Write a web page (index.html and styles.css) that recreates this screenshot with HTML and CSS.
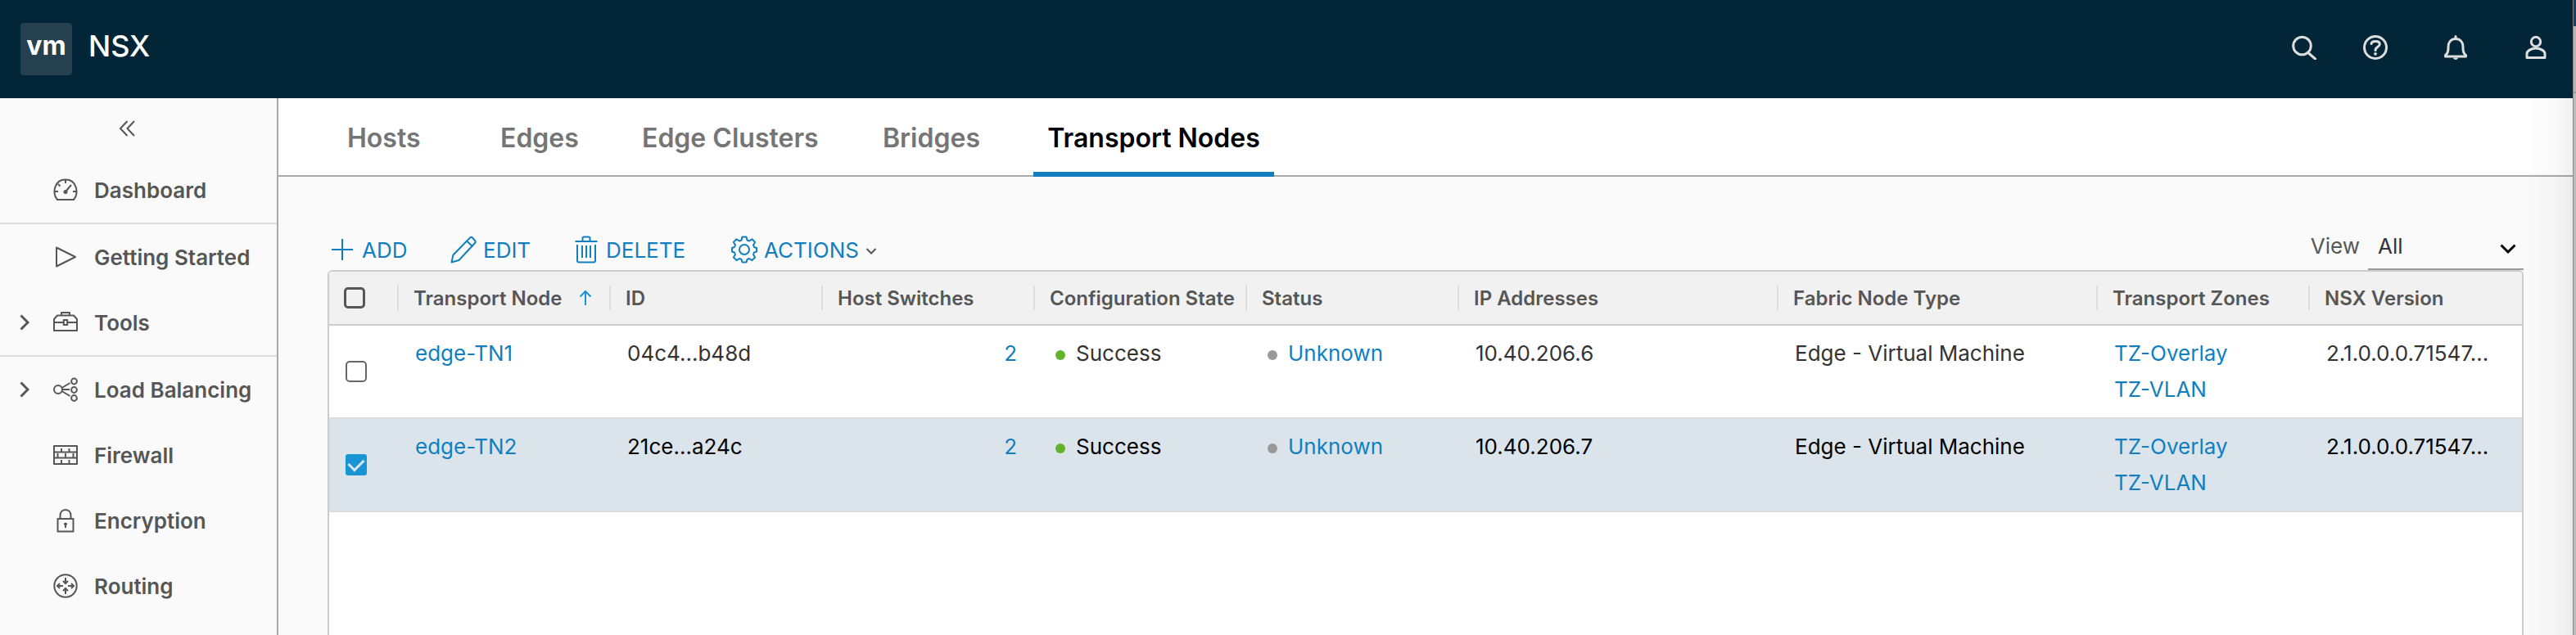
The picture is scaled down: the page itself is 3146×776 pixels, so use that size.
FILE: index.html
```html
<!DOCTYPE html>
<html lang="en">
<head>
<meta charset="utf-8">
<title>NSX - Transport Nodes</title>
<link rel="stylesheet" href="styles.css">
</head>
<body>
<div class="app">
  <header class="topbar">
    <span class="logo">vm</span>
    <span class="product">NSX</span>
    <div class="top-actions">
      <button type="button" aria-label="Search"><svg class="icon-top" viewBox="0 0 30 30"><circle cx="12.500" cy="13" r="10.800"/><path d="M20.500 22l8 7" stroke-linecap="round"/></svg></button>
      <button type="button" aria-label="Help"><svg class="icon-top" viewBox="0 0 30 30"><circle cx="15" cy="15" r="13.500"/><path d="M10 10.500C10.500 6.500 20.300 6.200 20.300 11c0 3.500-5.300 3-5.300 7.500" stroke-linecap="round"/><circle class="fill" cx="15" cy="22.800" r="1.900"/></svg></button>
      <button type="button" aria-label="Notifications"><svg class="icon-top" viewBox="0 0 30 30"><path d="M2.500 26h25v-1.500c-3-2-3.500-4-3.500-8.500v-2c0-5-3-9.500-9-9.500S6 9 6 14v2c0 4.500-.5 6.500-3.500 8.500z" stroke-linejoin="round"/><path d="M15 1.500v3" stroke-linecap="round"/><path class="fill" d="M12 27.500h6c0 3.300-6 3.300-6 0z"/></svg></button>
      <button type="button" aria-label="User"><svg class="icon-top" viewBox="0 0 30 30"><circle cx="15" cy="8" r="5.700"/><path d="M4 27.500v-5c0-3 5-6.500 11-6.500s11 3.500 11 6.500v5z" stroke-linejoin="round"/></svg></button>
    </div>
  </header>

  <nav class="sidebar" aria-label="Main">
    <button type="button" class="collapse" aria-label="Collapse menu"><svg class="icon-collapse" viewBox="0 0 20 20"><path d="M10.500 1L2 10l8.500 9M19 1l-8.500 9 8.500 9"/></svg></button>
    <div class="group">
      <a class="item" href="#"><span class="twist"></span>
        <svg class="icon" viewBox="0 0 30 30"><path d="M5 27C-1.500 19 1 2.500 15 2.500S31.500 19 25 27z" stroke-linejoin="round"/><path d="M15 3v4M2 17h4M28 17h-4M6 8l2.500 2.500M16 16l6-7"/><circle class="fill" cx="15" cy="17.500" r="2.500"/></svg>
        Dashboard</a>
    </div>
    <div class="group">
      <a class="item" href="#"><span class="twist"></span>
        <svg class="icon" viewBox="0 0 30 30"><path d="M4 3.500v23L27 15z" stroke-linejoin="round"/></svg>
        Getting Started</a>
      <a class="item" href="#"><svg class="twist" viewBox="0 0 12 20"><path d="M1.500 1.500L10 10l-8.500 8.500"/></svg>
        <svg class="icon" viewBox="0 0 30 30"><path d="M5 6.500h20l4 4.500v14H1V11zM10 6.500V3h10v3.500M1 15h11M18 15h11M12.800 12h4.400v6h-4.400z" stroke-linejoin="round"/></svg>
        Tools</a>
    </div>
    <div class="group">
      <a class="item" href="#"><svg class="twist" viewBox="0 0 12 20"><path d="M1.500 1.500L10 10l-8.500 8.500"/></svg>
        <svg class="icon" viewBox="0 0 30 30"><circle cx="6" cy="15" r="5"/><circle cx="25.500" cy="5" r="3.400"/><circle cx="25.500" cy="15.500" r="3.400"/><circle cx="25.500" cy="25.500" r="3.400"/><path d="M10.500 13L20.500 7M11 15h9M10.500 17l10 6"/></svg>
        Load Balancing</a>
      <a class="item" href="#"><span class="twist"></span>
        <svg class="icon" viewBox="0 0 30 30"><path d="M1 4h28v22H1zM1 11.500h28M1 18.500h28M10 7v4.500M19.500 7v4.500M5.500 13v5.500M15 13v5.500M24.500 13v5.500M10 21v5M19.500 21v5" stroke-linejoin="round"/></svg>
        Firewall</a>
      <a class="item" href="#"><span class="twist"></span>
        <svg class="icon" viewBox="0 0 30 30"><path d="M5.500 13h19v15.500h-19zM8.500 13V9c0-9.500 13-9.500 13 0v4M15 20v4" stroke-linejoin="round"/><circle class="fill" cx="15" cy="19.500" r="2"/></svg>
        Encryption</a>
      <a class="item" href="#"><span class="twist"></span>
        <svg class="icon" viewBox="0 0 30 30"><circle cx="15" cy="15" r="13.700"/><path d="M15 5v6.500M12 9l3 3 3-3M15 25v-6.500M12 21l3-3 3 3M12 15H5M8 12l-3 3 3 3M18 15h7M22 12l3 3-3 3"/></svg>
        Routing</a>
    </div>
  </nav>

  <main class="main">
    <div class="tabs" role="tablist">
      <button type="button" role="tab" class="tab">Hosts</button>
      <button type="button" role="tab" class="tab">Edges</button>
      <button type="button" role="tab" class="tab">Edge Clusters</button>
      <button type="button" role="tab" class="tab">Bridges</button>
      <button type="button" role="tab" class="tab active" aria-selected="true">Transport Nodes</button>
    </div>

    <section class="content">
      <div class="toolbar">
        <div class="commands">
          <button type="button" class="cmd"><svg class="icon-cmd" viewBox="0 0 32 34"><path d="M3 17h26M16 4v26"/></svg>ADD</button>
          <button type="button" class="cmd"><svg class="icon-cmd" viewBox="0 0 32 34"><path d="M1.500 32.500l2-9L24 2.500c1-1 2-1 3 0l3 3.500c1 1 1 2 0 3L10.500 30zM20 6.500l7.500 7" stroke-linejoin="round"/></svg>EDIT</button>
          <button type="button" class="cmd"><svg class="icon-cmd" viewBox="0 0 32 34"><path d="M2.500 7h27M5 11v19.500c0 1 1 2 2 2h18c1 0 2-1 2-2V11M11.500 6V3c0-1 .5-1.500 1.500-1.500h6c1 0 1.500.5 1.500 1.500v3M11 12v15M16 12v15M21 12v15"/></svg>DELETE</button>
          <button type="button" class="cmd"><svg class="icon-cmd" viewBox="0 0 32 34"><circle cx="16" cy="17" r="6"/><path d="M13.500 1.500h5l1 4 2.500 1 3.500-2.200 3.600 3.600L27 11.500l1 2.500 3 1v4.500l-3 1-1 2.500 2.100 3.500-3.600 3.600L22 28l-2.500 1-1 3.500h-5l-1-3.500L10 28l-3.500 2.100-3.600-3.600L5 23l-1-2.500-3-1V15l3-1 1-2.500-2.100-3.600 3.600-3.600L10 6.500l2.500-1z" stroke-linejoin="round"/></svg>ACTIONS<svg class="caret" viewBox="0 0 14 10"><path d="M1.500 2L7 7.500 12.500 2"/></svg></button>
        </div>
        <div class="view">
          <label for="view">View</label>
          <div class="select-wrap">
            <select id="view"><option>All</option><option>Success</option></select>
            <svg class="select-arrow" viewBox="0 0 20 14"><path d="M1.500 2.500L10 11l8.500-8.500"/></svg>
          </div>
        </div>
      </div>

      <div class="grid">
        <table>
          <colgroup><col class="c-check"><col class="c-std"><col class="c-std"><col class="c-std"><col class="c-std"><col class="c-std"><col class="c-wide"><col class="c-wide"><col class="c-std"><col></colgroup>
          <thead>
            <tr>
              <th><input type="checkbox" aria-label="Select all"></th>
              <th><span class="head">Transport Node<svg class="sort" viewBox="0 0 16 20"><path d="M8 19V2M1.500 8.500L8 2l6.500 6.500"/></svg></span></th>
              <th><span class="head">ID</span></th>
              <th><span class="head">Host Switches</span></th>
              <th><span class="head">Configuration State</span></th>
              <th><span class="head">Status</span></th>
              <th><span class="head">IP Addresses</span></th>
              <th><span class="head">Fabric Node Type</span></th>
              <th><span class="head">Transport Zones</span></th>
              <th><span class="head">NSX Version</span></th>
            </tr>
          </thead>
          <tbody>
            <tr>
              <td class="check"><input type="checkbox" aria-label="Select edge-TN1"></td>
              <td><a href="#">edge-TN1</a></td>
              <td>04c4...b48d</td>
              <td class="num"><a href="#">2</a></td>
              <td><span class="state"><i class="dot ok"></i>Success</span></td>
              <td><span class="state"><i class="dot"></i><a href="#">Unknown</a></span></td>
              <td>10.40.206.6</td>
              <td>Edge - Virtual Machine</td>
              <td><a class="zone" href="#">TZ-Overlay</a><a class="zone" href="#">TZ-VLAN</a></td>
              <td>2.1.0.0.0.71547…</td>
            </tr>
            <tr class="selected">
              <td class="check"><input type="checkbox" checked aria-label="Select edge-TN2"></td>
              <td><a href="#">edge-TN2</a></td>
              <td>21ce...a24c</td>
              <td class="num"><a href="#">2</a></td>
              <td><span class="state"><i class="dot ok"></i>Success</span></td>
              <td><span class="state"><i class="dot"></i><a href="#">Unknown</a></span></td>
              <td>10.40.206.7</td>
              <td>Edge - Virtual Machine</td>
              <td><a class="zone" href="#">TZ-Overlay</a><a class="zone" href="#">TZ-VLAN</a></td>
              <td>2.1.0.0.0.71547…</td>
            </tr>
          </tbody>
        </table>
      </div>
    </section>
  </main>
  <div class="edge"><div class="edge-top"></div><div class="edge-mid"></div></div>
</div>
</body>
</html>
```
FILE: styles.css
```css
* { box-sizing: border-box; }

body {
  margin: 0;
  font-family: Inter, "Open Sans", sans-serif;
  font-size: 26px;
  color: #333;
  background: #fafafa;
}

a { color: #117fbf; text-decoration: none; }

button {
  padding: 0;
  border: 0;
  background: none;
  font: inherit;
  color: inherit;
  cursor: pointer;
}

svg { display: block; flex: none; fill: none; stroke: currentColor; }
svg .fill { fill: currentColor; stroke: none; }

.app {
  display: grid;
  grid-template-columns: 340px minmax(0, 1fr) 4px;
  grid-template-rows: 120px minmax(0, 1fr);
  height: 100vh;
  overflow: hidden;
}

/* Top bar */
.topbar {
  grid-column: 1 / 3;
  display: flex;
  align-items: flex-start;
  padding: 28px 30px 0 25px;
  background: #022638;
  color: #fff;
}

.logo {
  width: 63px;
  height: 64px;
  border-radius: 4px;
  background: #25414f;
  font-size: 32px;
  font-weight: 700;
  line-height: 56px;
  text-align: center;
}

.product {
  margin-left: 20px;
  font-size: 36px;
  font-weight: 500;
  line-height: 56px;
}

.top-actions {
  display: grid;
  grid-template-columns: 87px 98px 98px 30px;
  margin-left: auto;
  padding-top: 15px;
  color: #dedede;
}

.icon-top { width: 30px; height: 30px; stroke-width: 3; }

/* Side navigation */
.sidebar {
  border-right: 2px solid #a9a9a9;
  color: #565656;
}

.collapse {
  display: flex;
  align-items: center;
  width: 100%;
  height: 72px;
  padding-left: 145px;
}

.icon-collapse { width: 20px; height: 20px; margin-top: 2px; stroke-width: 2; }

.group + .group { border-top: 2px solid #ddd; }

.item {
  display: grid;
  grid-template-columns: 21px 30px auto;
  justify-content: start;
  align-items: center;
  height: 80px;
  padding-left: 24px;
  column-gap: 20px;
  font-weight: 600;
  color: #565656;
  white-space: nowrap;
}

.item .icon { width: 30px; height: 30px; stroke-width: 2; }
.item .twist { width: 12px; height: 20px; stroke-width: 3; }

/* Main area */
.main {
  position: relative;
  display: flex;
  flex-direction: column;
}

.main::after {
  content: "";
  position: absolute;
  inset: 0 0 0 auto;
  width: 60px;
  background: linear-gradient(to right, rgba(0, 0, 0, 0), rgba(0, 0, 0, 0.02) 60%, rgba(0, 0, 0, 0.06));
  pointer-events: none;
}

.tabs {
  display: grid;
  grid-template-columns: 187px 173px 294px 184px 294px;
  height: 96px;
  padding-left: 84px;
  border-bottom: 2px solid #a9a9a9;
  background: #fff;
}

.tab {
  height: 96px;
  font-size: 32px;
  font-weight: 600;
  color: #757575;
  text-align: left;
}

.tab.active {
  border-top: 6px solid transparent;
  border-bottom: 6px solid #117fbf;
  color: #000;
  text-align: center;
}

.content {
  flex: 1;
  display: flex;
  flex-direction: column;
  padding: 0 60px;
}

.toolbar {
  display: flex;
  justify-content: space-between;
  align-items: flex-end;
  height: 114px;
}

.commands {
  display: grid;
  grid-template-columns: 148px 150px 193px auto;
  height: 50px;
  padding-left: 2px;
}

.cmd {
  display: flex;
  align-items: center;
  gap: 8px;
  color: #117fbf;
}

.icon-cmd { width: 32px; height: 34px; stroke-width: 2; }
.caret { width: 14px; height: 10px; margin-top: 4px; stroke-width: 2; color: #565656; }

.view { display: flex; align-items: flex-end; gap: 10px; color: #565656; }
.view label { line-height: 58px; }

.select-wrap { position: relative; width: 190px; }

.select-wrap select {
  appearance: none;
  display: block;
  width: 100%;
  height: 58px;
  padding: 0 12px;
  border: 0;
  border-bottom: 2px solid #999;
  border-radius: 0;
  background: transparent;
  font: inherit;
  color: #333;
}

.select-arrow {
  position: absolute;
  right: 9px;
  top: 25px;
  width: 20px;
  height: 14px;
  stroke-width: 3;
  color: #000;
  pointer-events: none;
}

/* Data grid */
.grid {
  flex: 1;
  border: 2px solid #ccc;
  border-bottom: 0;
  border-radius: 6px 6px 0 0;
  background: #fff;
  overflow: hidden;
}

table {
  width: 100%;
  table-layout: fixed;
  border-collapse: separate;
  border-spacing: 0;
}

.c-check { width: 83px; }
.c-std { width: 259px; }
.c-wide { width: 390px; }

th {
  height: 66px;
  padding: 0;
  border-bottom: 2px solid #ccc;
  background: #f1f1f1;
  font-size: 24px;
  font-weight: 600;
  text-align: left;
  color: #565656;
}

.head {
  display: flex;
  align-items: center;
  gap: 20px;
  height: 30px;
  padding-left: 18px;
  border-left: 2px solid #ddd;
  white-space: nowrap;
}

.sort { width: 16px; height: 20px; stroke-width: 2; color: #1995d5; }

td {
  padding: 12px 0 12px 22px;
  border-bottom: 2px solid #ddd;
  line-height: 44px;
  vertical-align: top;
  white-space: nowrap;
}

td.check { padding: 0 0 0 20px; vertical-align: middle; line-height: 0; }
td.num { padding-right: 20px; text-align: right; }

.selected td { background: #dbe3eb; color: #000; }

.zone { display: block; }

.state { display: flex; align-items: center; gap: 13px; padding-left: 5px; }

.dot { width: 12px; height: 12px; margin-top: 4px; border-radius: 50%; background: #999; }
.dot.ok { background: #62b32a; }

input[type="checkbox"] {
  appearance: none;
  display: block;
  width: 26px;
  height: 26px;
  margin: 0;
  border: 2px solid #666;
  border-radius: 5px;
  background: #fff;
}

th input[type="checkbox"] {
  margin-left: 18px;
  border: 3px solid #565656;
  background: transparent;
}

input[type="checkbox"]:checked {
  display: grid;
  place-items: center;
  border: 0;
  border-radius: 3px;
  background: #1995d5;
}

input[type="checkbox"]:checked::before {
  content: "";
  width: 15px;
  height: 9px;
  margin-bottom: 4px;
  border: solid #dbe3eb;
  border-width: 0 0 3px 3px;
  transform: rotate(-45deg);
}

/* Window edge */
.edge {
  grid-column: 3;
  grid-row: 1 / 3;
  border-left: 1px solid #8b8b8b;
  background: #bcbcbc;
}

.edge-top { height: 32px; background: #1d3b63; }
.edge-mid { height: 82px; border-bottom: 2px solid #999; background: #b9b3b3; }
```
